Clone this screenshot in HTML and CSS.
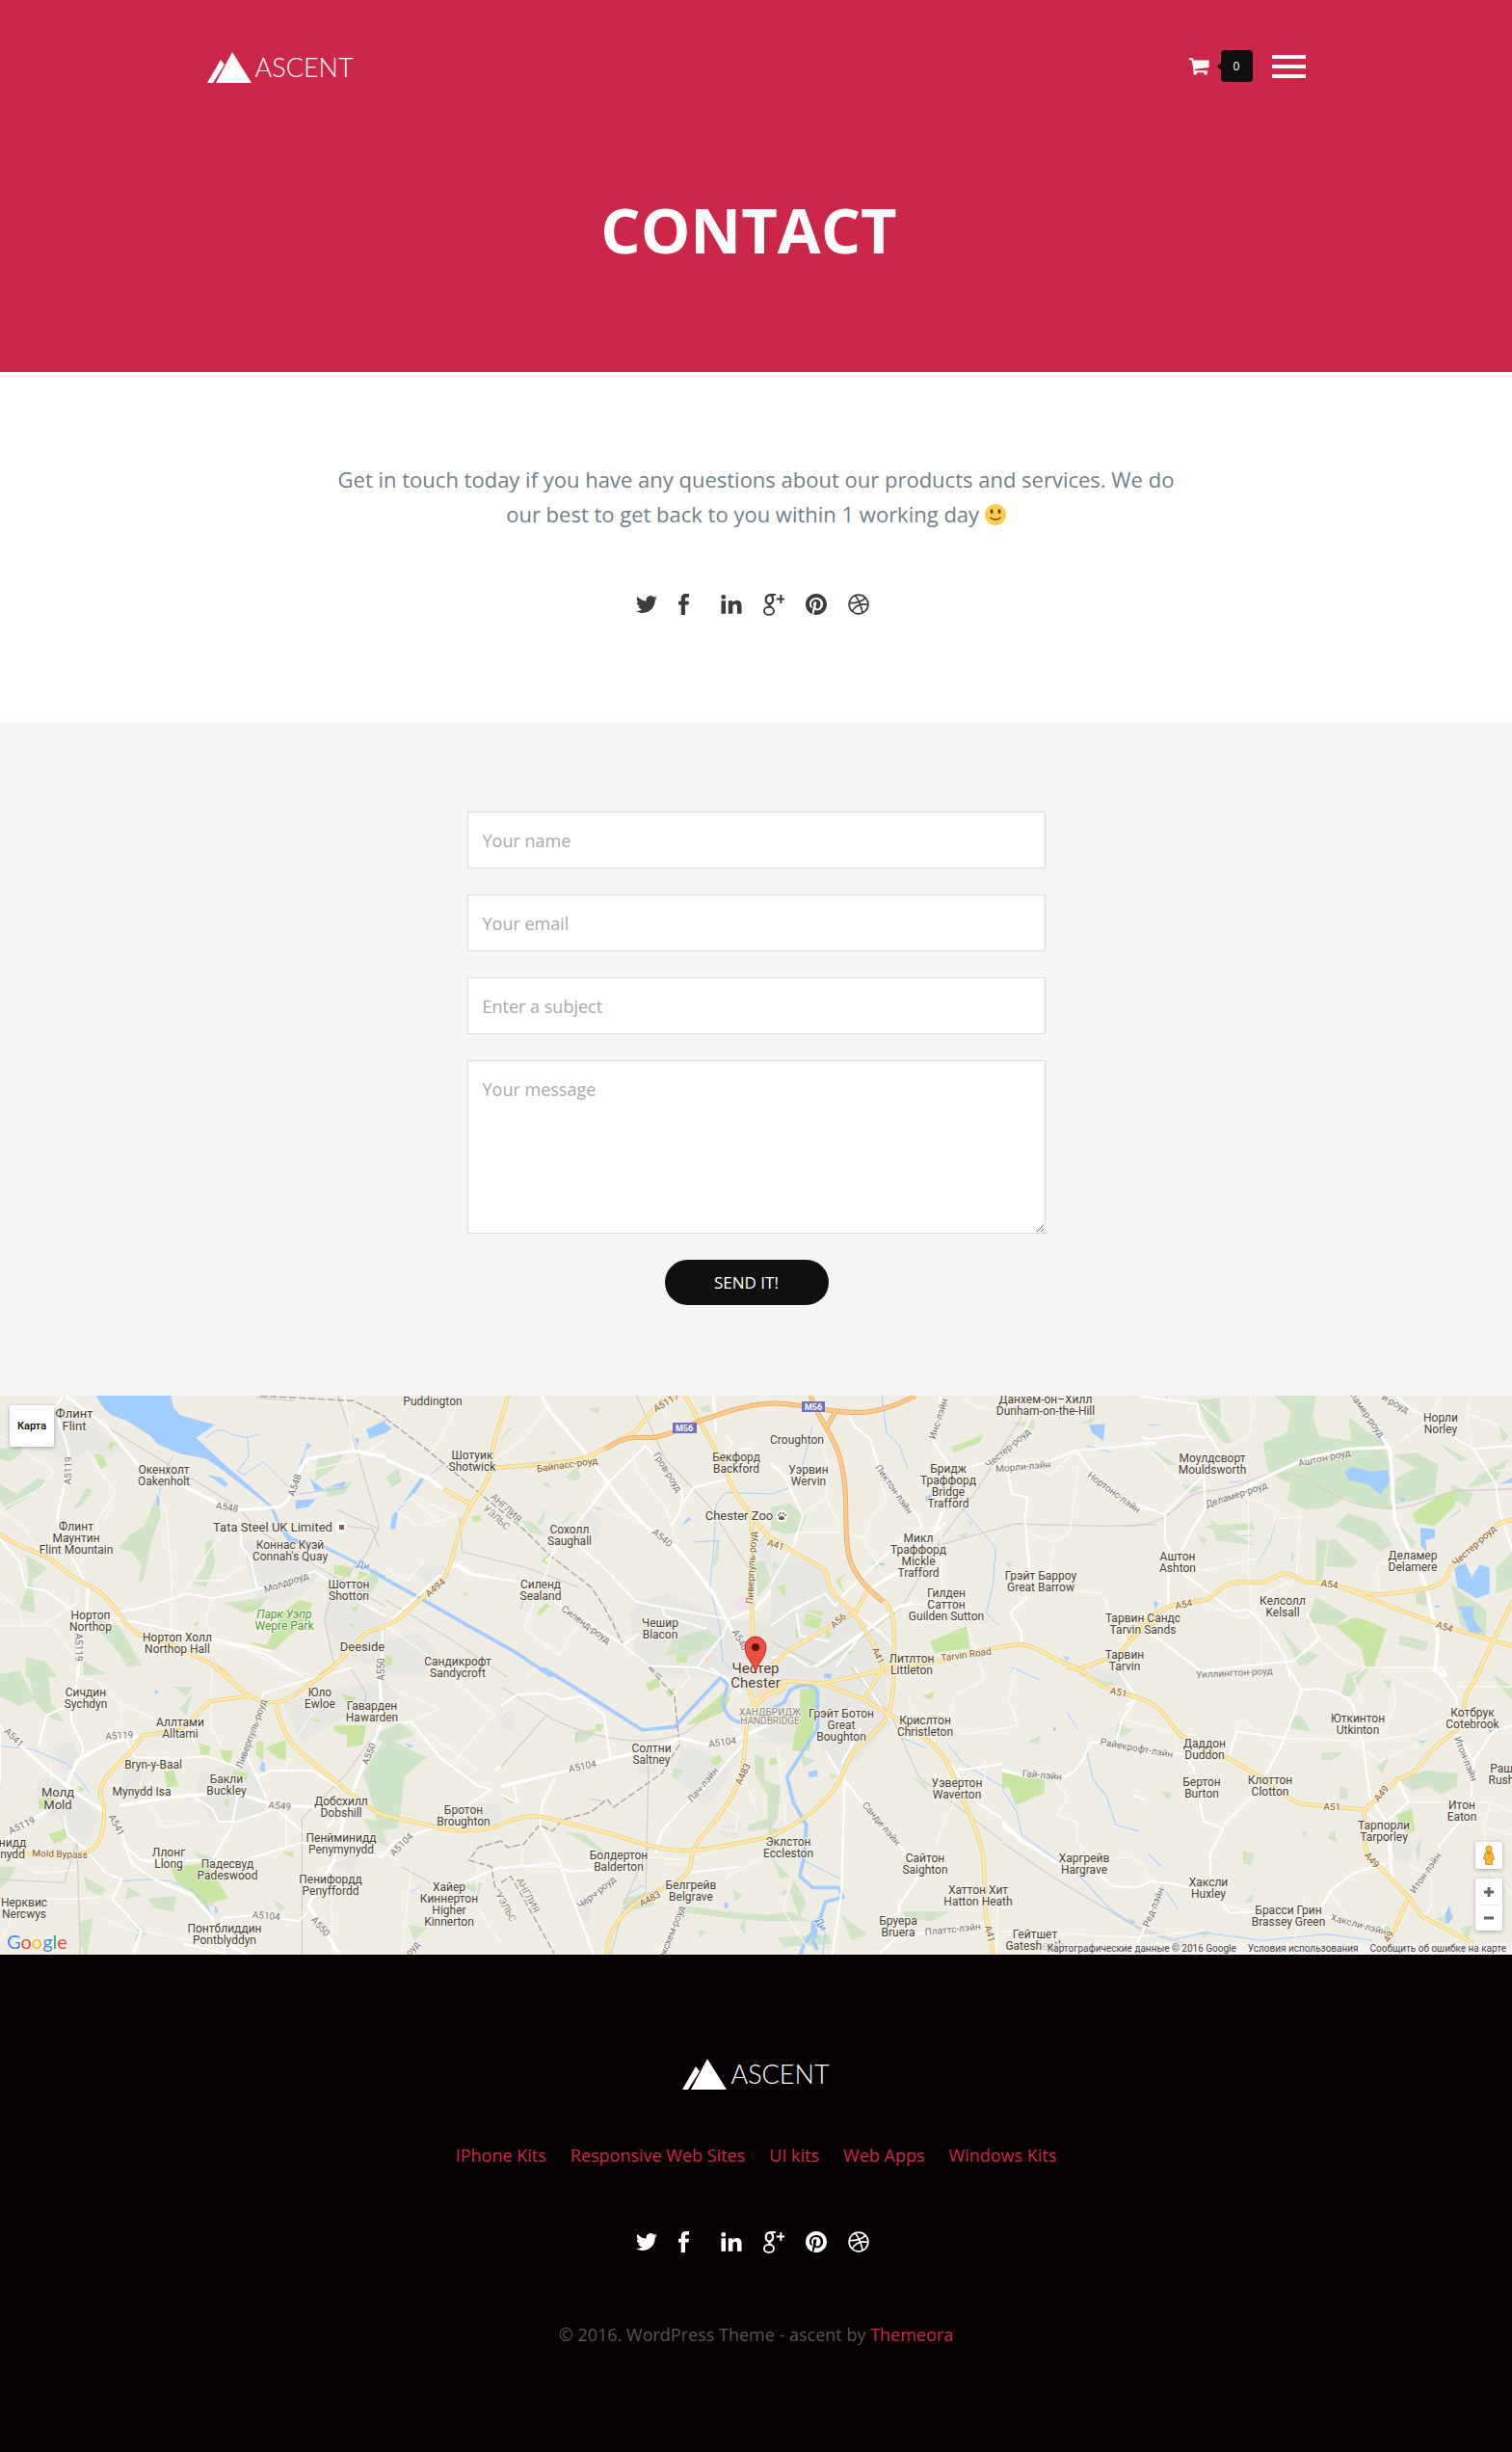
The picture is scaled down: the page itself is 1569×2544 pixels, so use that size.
FILE: index.html
```html
<!DOCTYPE html>
<html lang="en">
<head>
<meta charset="UTF-8">
<meta name="viewport" content="width=device-width, initial-scale=1">
<title>Contact - Ascent</title>
<link rel="stylesheet" href="styles.css">
</head>
<body>

<!-- icon sprite -->
<svg class="sprite" aria-hidden="true">
  <symbol id="i-mountain" viewBox="0 0 46 32"><path d="M26 0 46 32H9zM14 8l4 5L6 32H0z"/></symbol>
  <symbol id="i-twitter" viewBox="0 0 24 24"><path d="M23.95 4.57a10 10 0 0 1-2.82.77 4.96 4.96 0 0 0 2.16-2.72c-.95.55-2 .95-3.12 1.18a4.92 4.92 0 0 0-8.38 4.48C7.69 8.1 4.07 6.13 1.64 3.16a4.82 4.82 0 0 0-.67 2.47c0 1.71.87 3.21 2.19 4.1a4.9 4.9 0 0 1-2.23-.62v.06a4.92 4.92 0 0 0 3.95 4.83 5 5 0 0 1-2.21.08 4.94 4.94 0 0 0 4.6 3.42A9.87 9.87 0 0 1 0 19.54a14 14 0 0 0 7.55 2.21c9.05 0 14-7.5 14-13.98 0-.21 0-.42-.02-.63a9.94 9.94 0 0 0 2.42-2.57z"/></symbol>
  <symbol id="i-facebook" viewBox="0 0 24 24"><path d="M3 24V12.500H0V8.500h3V6C3 2 5 0 8.500 0H12v4H9.500C8 4 7.700 4.700 7.700 6v2.500H12l-.6 4H7.700V24z"/></symbol>
  <symbol id="i-linkedin" viewBox="0 0 24 24"><path d="M.5 8h5v14.500h-5zM3 1a2.700 2.700 0 1 1 0 5.400A2.700 2.700 0 0 1 3 1zM8.500 8h4.800v2c.8-1.400 2.400-2.400 4.700-2.400 4.500 0 5.500 2.900 5.500 6.900v8h-5v-7.200c0-1.900-.2-3.700-2.300-3.700s-2.700 1.600-2.700 3.600v7.300h-5z"/></symbol>
  <symbol id="i-google" viewBox="0 0 24 24"><g fill="none" stroke="currentColor"><ellipse cx="7" cy="6.500" rx="4" ry="5" stroke-width="2.600"/><ellipse cx="6.500" cy="19.500" rx="5.500" ry="4.300" stroke-width="2"/><path d="M7 1.200h7M9.500 10.500c-4 1.500-4 3 0 4.500" stroke-width="2.200"/><path d="M15 6h10M20 1v10" stroke-width="2.200"/></g></symbol>
  <symbol id="i-pinterest" viewBox="0 0 24 24"><path d="M12 0C5.373 0 0 5.372 0 12c0 5.084 3.163 9.426 7.627 11.174-.105-.949-.2-2.405.042-3.441.218-.937 1.407-5.965 1.407-5.965s-.359-.719-.359-1.782c0-1.668.967-2.914 2.171-2.914 1.023 0 1.518.769 1.518 1.690 0 1.029-.655 2.568-.994 3.995-.283 1.194.599 2.169 1.777 2.169 2.133 0 3.772-2.249 3.772-5.495 0-2.873-2.064-4.882-5.012-4.882-3.414 0-5.418 2.561-5.418 5.207 0 1.031.397 2.138.893 2.738.098.119.112.224.083.345l-.333 1.360c-.053.220-.174.267-.402.161-1.499-.698-2.436-2.889-2.436-4.649 0-3.785 2.750-7.262 7.929-7.262 4.163 0 7.398 2.967 7.398 6.931 0 4.136-2.607 7.464-6.227 7.464-1.216 0-2.359-.631-2.750-1.378l-.748 2.853c-.271 1.043-1.002 2.350-1.492 3.146 1.124.347 2.317.535 3.554.535 6.627 0 12-5.373 12-12S18.627 0 12 0z"/></symbol>
  <symbol id="i-dribbble" viewBox="0 0 24 24"><g fill="none" stroke="currentColor" stroke-width="1.800"><circle cx="12" cy="12" r="10.800"/><path d="M8 2c4 5 7 11 8.500 20M1.500 10.500C9 10.700 16 9 19.800 4.500M4.500 20c4-7 9.500-9.500 18.300-7.500"/></g></symbol>
  <symbol id="i-cart" viewBox="0 0 24 20"><path d="M0 0h4.500l.6 2.500H23.500v8.500L7 13v1.800h14.500V17H5V12L3 2.300H0z"/><circle cx="7.300" cy="18" r="2"/><circle cx="19.500" cy="18" r="2"/></symbol>
</svg>

<header class="hero">
  <div class="container nav">
    <a href="#" class="logo"><svg><use href="#i-mountain"/></svg><span>ASCENT</span></a>
    <div class="nav-right">
      <a href="#" class="cart" aria-label="Cart"><svg><use href="#i-cart"/></svg><span class="count">0</span></a>
      <button class="burger" type="button" aria-label="Menu"><span></span><span></span><span></span></button>
    </div>
  </div>
  <h1>CONTACT</h1>
</header>

<section class="intro">
  <p>Get in touch today if you have any questions about our products and services. We do our best to get back to you within 1 working day
    <svg class="smile" viewBox="0 0 36 36"><circle cx="18" cy="18" r="18" fill="#ffcc4d"/><g fill="#664500"><ellipse cx="11.500" cy="12.500" rx="2.500" ry="4"/><ellipse cx="24.500" cy="12.500" rx="2.500" ry="4"/><path d="M10 22c4 4 12 4 16 0 1-1 2 0 1.500 1-4 6-15 6-19 0-.5-1 .5-2 1.500-1z"/></g></svg></p>
  <nav class="social">
    <a href="#" aria-label="Twitter"><svg><use href="#i-twitter"/></svg></a>
    <a href="#" aria-label="Facebook"><svg><use href="#i-facebook"/></svg></a>
    <a href="#" aria-label="LinkedIn"><svg><use href="#i-linkedin"/></svg></a>
    <a href="#" aria-label="Google+"><svg><use href="#i-google"/></svg></a>
    <a href="#" aria-label="Pinterest"><svg><use href="#i-pinterest"/></svg></a>
    <a href="#" aria-label="Dribbble"><svg><use href="#i-dribbble"/></svg></a>
  </nav>
</section>

<section class="contact">
  <form class="contact-form">
    <input type="text" name="name" placeholder="Your name" aria-label="Your name">
    <input type="email" name="email" placeholder="Your email" aria-label="Your email">
    <input type="text" name="subject" placeholder="Enter a subject" aria-label="Enter a subject">
    <textarea name="message" placeholder="Your message" aria-label="Your message"></textarea>
    <button type="submit" class="btn">SEND IT!</button>
  </form>
</section>

<section class="map">
  <svg class="map-canvas" viewBox="0 0 1569 580" preserveAspectRatio="xMidYMid slice">
    <defs>
      <path id="y1" d="M0 455C60 500 110 505 150 530S230 595 270 612 340 660 380 715C420 790 500 775 560 810S680 860 720 905M980 905C1050 870 1110 790 1140 760L1205 740"/>
      <path id="y2" d="M0 740 40 720 130 640C190 600 200 560 215 500S250 380 290 330 330 240 335 180L385 15M335 250C400 240 580 240 640 210L690 185C740 150 770 150 790 120L860 40 910 25M180 315 265 362 290 330M930 20 975 100C1030 190 1060 260 1085 320L1140 400 1205 480M1140 400V560L1143 900"/>
      <path id="y3" d="M0 465 70 510C120 540 150 550 175 575 170 640 230 670 260 700L320 800 345 860 355 905M0 870C40 820 100 790 170 750L260 700 305 625M350 662C390 700 385 740 380 880M200 905 350 875 530 850 680 812 770 798C830 800 860 840 960 875L1080 830C1120 790 1140 750 1205 725M960 875 985 905"/>
      <path id="y4" d="M0 780C60 720 100 690 150 675L250 658C290 630 300 610 345 605H430C460 590 470 580 495 578S530 600 560 604 640 605 700 628 790 645 905 630 990 570 1020 545L1140 440C1160 415 1180 415 1205 410M640 610 720 640 860 695 1000 745 1205 805M1205 660 1140 790 1085 905"/>
      <path id="y5" d="M670 0 770 85C820 115 870 115 910 90L1040 0M770 90 655 105 560 195 440 212C420 270 340 310 320 360S325 400 325 440 320 560 270 575 150 590 60 575M860 115C870 180 900 240 950 275L1080 385 1170 450C1230 475 1280 475 1350 495S1500 510 1565 490"/>
      <path id="y6" d="M0 487C60 465 100 455 150 470L350 520C440 550 500 570 570 570S720 550 800 535 960 460 1010 410 1060 330 1090 270L1180 185C1215 140 1220 110 1222 0M1190 0 1130 100M770 60 790 125C750 180 765 250 750 320S690 450 630 520 610 610 570 650 450 700 400 750 330 830 330 905M790 120 830 85 880 65V42L1000 50 1190 8M1000 50 1130 100 1250 170C1330 230 1370 250 1400 320S1480 500 1495 560 1500 700 1510 780L1535 905"/>
      <path id="y7" d="M200 0 245 8C300 70 350 70 420 95S500 150 530 190 620 255 700 285L800 345C850 385 880 410 920 425L1115 443 1220 345C1270 340 1290 290 1340 240L1390 200C1430 160 1410 110 1435 70L1475 0M1115 443C1115 500 1100 560 1140 600L1250 715 1290 775C1340 800 1400 830 1450 860M1250 715 1170 895"/>
      <path id="o2" d="M685 190C730 160 760 150 830 155 900 145 950 110 1000 95S1100 55 1205 48"/>
      <path id="o3" d="M0 48C60 45 110 60 200 72S350 75 450 25M122 20C140 90 200 150 215 220 245 330 225 400 240 510 250 570 290 620 350 665M175 120 200 75"/>
    </defs>

    <rect width="1569" height="580" fill="#f0ede5"/>

    <svg x="0" y="-8" width="400" height="300" viewBox="0 0 1200 900">
      <path class="town" d="M180 60 270 110 400 190 330 220 270 190 230 240 170 210 110 190zM760 470 900 500 1000 570 960 630 880 670 800 650 770 560zM1020 620 1100 640 1200 720V870L1060 840 1010 720z"/>
      <path class="wood" d="M0 190 60 180 70 200 30 230 0 220zM0 300 50 330 120 280 150 290 70 350 20 380 0 350zM80 520 150 560 100 600 110 700 60 690 90 600zM370 500 400 460 450 430 490 330 500 400 470 480 450 590 430 610 440 550 410 510zM270 310 290 320 250 370 230 375zM640 480 660 470 670 550 640 620 600 610 640 550zM300 720 370 740 440 860 400 870 350 800 310 760zM80 840 140 850 180 900H80zM700 670 830 650 810 690 760 700zM990 210 1080 195 1040 250 980 290zM260 850 330 890 260 895zM1010 310 1100 290 1070 330 1020 340zM1110 620 1170 560 1180 600 1140 660z"/>
      <path class="park" d="M290 205 320 210 335 240 315 252zM345 165 362 172 345 192 335 185zM770 790 830 800 880 700 930 660 975 670 940 740 890 780 850 820zM1040 550 1100 560 1090 590 1040 580zM1120 570 1150 580 1110 600zM760 675 790 680 790 700 760 695zM1090 685 1120 678 1105 700zM1085 735 1105 730 1095 750zM600 735 620 725 610 745z"/>
      <path class="water" d="M298 20C320 70 340 85 390 100L470 150 490 175 560 205 640 220 700 260 750 300 840 370 870 440 900 480 1010 500 1110 550 1200 600V585L1090 530 1000 485 915 468 880 440 850 370 760 290 690 230 610 155 670 115 560 85 540 60 530 20zM645 270 690 280 710 300 700 308zM965 282 1010 318 980 320zM920 350 985 345 960 370 920 378zM1140 130 1200 100V140L1150 158zM1105 155 1118 160 1112 180zM955 170 970 180 955 192zM490 330 500 330 495 370 488 360zM1030 305 1075 290 1070 308z"/>
      <path class="stream" d="M640 155C680 120 700 130 720 145L770 155 775 210 740 260 760 270 820 230 850 260 900 310M770 155 805 145M930 330 1080 310M955 180 930 260 940 220M490 370 505 270 540 210"/>
      <path class="rail" d="M230 60 560 260 740 370 800 440 960 540 1200 680M800 30 920 40M1050 20 1110 190 1180 430 1140 520 1040 620 1010 720 1040 860M1050 380 1180 440M1080 430 1160 440 1180 500"/>
      <path class="border-line" d="M810 25 1100 40 1200 90"/>
      <path class="lane" d="M70 195 170 260 130 310 0 380M270 200 360 325 300 420 310 480 240 555M490 320 520 400 535 600 530 790M0 380 80 440 150 560M750 410 720 430 650 510 590 610 560 640M0 640 60 690 70 740 160 740 200 790 250 860M0 740H130L240 670 240 620M660 660 640 720 660 790 760 810 900 880M0 150 70 180M950 260 1100 225 1200 160M960 220 960 260M600 600 690 600 760 550M1100 190 1070 20M350 370 320 420M250 740 360 730 440 760"/>
      <path class="street" d="M200 20 170 60 215 200C210 310 180 350 178 420L230 540 275 620 270 700 245 780V900M0 470 60 540 80 620 140 630 240 700 380 720 700 790 830 830 940 900M380 695 460 680 580 640 660 655 790 630 900 600 980 570 1090 650 1200 710M750 440V490L780 530 800 625M700 790 850 820M1190 900V740"/>
      <path class="main" d="M205 25 330 120 430 240 570 305 680 360 750 380 870 370C930 340 910 260 960 220L1100 195 1200 215"/>
      <use class="a-case" href="#y1"/><use class="a-road" href="#y1"/>
    </svg>

    <svg x="400" y="-8" width="400" height="300" viewBox="0 0 1200 900">
      <path class="town" d="M760 700 800 660 880 640 1000 690 1100 730 1200 720V900H860L780 830zM600 410 640 380 680 430 640 490 590 480zM90 560 180 550 210 590 120 610zM0 790 100 760 160 820 120 900H0zM1140 500 1200 430V560z"/>
      <path class="wood" d="M560 280 600 240 605 280 590 290zM380 130 430 100 400 120 350 170zM420 410 460 420 500 460 450 450zM1020 560 1030 480 1040 470 1035 540zM870 830 900 780 1000 750 1045 790 960 830zM470 430 500 370 490 420zM630 65 670 60 660 80zM510 200 530 195 525 210zM980 60 1010 50 1015 75 985 75zM540 430 600 370 570 410zM500 290 520 315 490 300zM700 680 720 760 740 800 710 740zM0 280 40 250 50 290 20 310zM1150 540 1180 540 1200 600 1160 650z"/>
      <path class="park" d="M650 370 680 375 660 380zM270 400 295 395 300 410 275 420zM490 530 510 520 505 550 485 540zM470 700 500 670 510 680 480 710zM240 640 260 635 250 650zM0 830 20 840 20 860 0 870zM905 830 940 830 940 855 905 855z"/>
      <path class="shop" d="M1080 660 1130 640 1130 690 1090 690z"/>
      <path class="sand" d="M990 840 1020 835 1000 860z"/>
      <path class="canal" d="M0 595 100 650 240 730 400 820 520 900"/>
      <path class="water" d="M920 430 945 400 950 410zM15 440 20 400 60 350 110 280 120 285 90 330 40 380 30 440zM0 110 20 125 0 140z"/>
      <path class="stream" d="M140 270 190 230M1200 330 1060 325 1030 360 1020 520 1010 620 1040 740 1050 850 1080 880M960 480 1040 475M430 660 420 690"/>
      <path class="rail" d="M780 20 870 220 1010 370 1130 560M230 400 240 510 440 560 600 620M0 660 200 780 380 900"/>
      <path class="border-line" d="M0 95 120 185 290 325 430 440 510 520 640 620 680 680 740 800 860 900"/>
      <path class="lane" d="M150 190 220 70 190 20M330 230 430 160 500 60M80 330 220 400 100 430 30 380 80 340 170 420M610 480 540 460 490 600 430 750 540 830 570 780 620 720M650 360 770 410 830 440M770 200 780 260 870 370 910 480M0 560 70 600 120 540M1060 150 1080 170 1040 230M510 540 490 620M700 280 640 360M1140 700 1200 640M1100 760 1200 870M850 20 870 90M0 740 200 880"/>
      <path class="street" d="M0 740 160 590 240 540M220 545 270 580 420 605M520 660 740 800 820 865 970 870 1050 770 1070 720M970 870 1060 900M500 540 600 420 700 290 810 180 920 310C930 350 920 390 890 430M925 360 960 310 1080 280M600 490 680 560 780 665 850 680 1070 720M860 680 870 710 1000 750M1140 190 1100 190M1020 20 1030 140M1070 720 1150 690 1200 630M740 800 790 765"/>
      <path class="main" d="M0 222 140 285 190 325M485 25 510 70 630 210 740 360 820 440 900 490 960 560 1020 640 1060 720 1100 790 1140 830M210 550 270 580 330 590"/>
      <use class="a-case" href="#y2"/><use class="a-road" href="#y2"/>
      <use class="m-case" href="#o2"/><use class="m-road" href="#o2"/>
    </svg>

    <svg x="800" y="-8" width="400" height="300" viewBox="0 0 1200 900">
      <path class="town" d="M0 560 60 520 170 570 200 660 300 740 370 790V900H0z"/>
      <path class="wood" d="M0 370 60 360 110 400 90 450 40 455 0 440zM580 460 610 450 605 470zM730 545 750 540 745 560zM960 110 1010 90 1000 110zM610 410 630 420 620 430zM310 540 340 545 330 565zM1060 350 1070 400zM640 780 680 765zM10 540 30 560 0 560zM750 110 820 100 820 130zM100 320 90 330z"/>
      <path class="park" d="M560 185 660 145 650 170 570 200zM495 790 610 740 620 810 510 825zM15 620 45 610 45 650zM200 600 235 575 215 600 230 640zM110 700 160 720 150 750 100 740zM170 740 190 770 170 780zM235 815 265 820 240 830zM105 690 165 695 155 710zM75 750 95 760 80 780z"/>
      <path class="water" d="M990 115 1040 112 1035 165 1015 150 1000 140zM480 340 500 330 500 350 485 355zM330 545 355 545 350 555zM1190 670 1200 660V685zM910 835 930 840 920 850z"/>
      <path class="stream" d="M345 25 360 140 400 180 425 250M590 320 600 380 660 450 700 500 690 620 670 700 710 740M0 330 60 310M90 270 130 120M1060 200 980 180"/>
      <path class="rail" d="M1200 425 1050 430 760 423 520 490M780 90 640 320 530 470 410 680 280 780 160 870M0 790 140 860 180 880"/>
      <path class="lane" d="M200 80 130 130M100 390 170 345 230 450 290 470 360 600M80 450 220 450M290 470 320 390 360 350 340 290M490 430 530 440 530 600 540 620M610 740 640 820 660 900M800 450 880 480 930 450 960 230M1160 150 1160 170M880 480 870 560 830 600M950 630 1030 640 1060 700 1130 830M950 195 870 270 780 240M590 30 640 60 700 70M0 240 70 300M160 170 180 250 170 340M540 670 400 675"/>
      <path class="street" d="M0 235 40 270 100 400 70 490 0 610M240 80 260 120 310 160 330 230 370 290 420 360 460 400 470 430 410 470 230 640 200 680M530 25 520 80 500 160 555 240M780 170 700 225 600 250M810 90 790 130M730 220 750 330 800 340 790 410 805 560M750 240 860 230 950 195 1040 320 1140 375 1200 380M950 195 1110 180 1200 170M800 650 745 700 780 760 780 800M0 740 70 690 170 640 200 680M0 840 60 830 120 870M80 700 90 770 180 790M280 770 200 870M250 690 340 760 380 800M545 420 520 440 410 530"/>
      <path class="main" d="M545 350 510 450M400 570 310 625M440 670 400 680 150 860 100 890"/>
      <use class="a-case" href="#y3"/><use class="a-road" href="#y3"/>
      <use class="m-case" href="#o3"/><use class="m-road" href="#o3"/>
    </svg>

    <svg x="1169" y="-8" width="400" height="300" viewBox="0 0 1200 900">
      <path class="wood" d="M460 25H590L580 90 600 150 700 165 690 90 740 130 800 165 820 240 820 375 740 370 680 340 640 370 560 380 500 350 510 300 440 260 425 170 500 140 510 70zM220 40 290 30 295 110 330 170 300 170 250 110zM830 210 900 200 970 240 960 330 900 350 830 360 840 280 900 250zM690 390 780 420 830 490 790 510 740 470 650 430zM590 470 625 475 610 600 590 600zM630 470 650 470 720 540 700 560 620 555zM590 650 690 710 650 740 560 730zM440 470 470 380 450 480 400 560zM240 430 390 420 400 440 280 445zM260 410 400 490 280 475zM1150 560 1200 510V620L1150 640zM1010 610 1060 650 1120 690 1120 790 1040 740zM840 420 900 480 890 500zM850 770 940 790 930 820 850 800zM1010 300 1080 330 1060 370 1020 350zM480 750 560 840 540 870 500 790zM510 510 525 520 515 550zM1100 270 1190 220 1150 290 1060 310zM170 300 240 310 200 330zM220 460 250 470 240 490zM60 180 160 240 130 240zM560 820 600 830 550 870zM900 640 940 630 930 680 900 670zM1160 120 1190 150 1170 170zM970 170 1060 220 1040 230z"/>
      <path class="park" d="M650 740 710 715 740 720 810 750 770 870 745 870 730 810zM890 390 980 330 1030 325 1020 370 960 430 900 420zM800 375 830 360 825 378z"/>
      <path class="water" d="M680 260 700 245 760 260 810 255 820 290 790 332 750 300 690 285zM775 130 798 160 780 165zM845 340 870 345 860 355zM915 435 960 440 960 465 930 475 935 510 915 490zM1020 560 1055 545 1075 590 1100 550 1130 560 1130 640 1090 655 1030 620zM1035 680 1080 680 1080 720 1110 760 1070 765 1050 720zM85 670 100 670 90 690zM750 45 760 60zM1160 300 1200 280V295zM955 680 975 675 970 685z"/>
      <path class="stream" d="M320 295 360 290M360 460H390M1000 410 1040 380M70 115H105M125 25V40"/>
      <path class="rail" d="M0 430C100 430 140 390 180 350S300 330 380 290 530 260 590 300 740 380 830 375 960 330 1030 320L1200 315"/>
      <path class="lane" d="M50 170 160 280 170 300M380 25 395 70 380 150 300 190M230 50 330 130M470 410 540 400 530 600M120 520 240 570 410 530 440 480 470 380 380 340 380 560 385 660 420 740 420 900M780 550 870 530M780 550 790 650M1070 30 1060 100 1080 190M850 170 920 110 980 30M1160 120 1120 100 1060 80M430 640 520 600 470 680M0 180 80 165M1150 260 1200 250M600 780 650 830 730 870H960M240 670 370 720 430 640M330 600 300 640"/>
      <path class="street" d="M40 25 220 50 230 110 290 200 240 260 245 375 200 450 170 510 130 580 130 680M0 350 120 395 120 480 140 510 180 580 330 695 380 690 430 740 490 830 510 900M50 155 70 160 180 145 250 155M60 750 230 880 520 850 600 780 560 700M1200 180 1080 190 1020 155 1000 110 890 70 840 25M1080 190 1150 300 1160 380 1200 500M950 880 980 870 1000 900M120 390 190 320 240 270"/>
      <path class="main" d="M710 25 780 130 820 190 835 410 890 530 930 610 970 780 960 880 1000 900M245 375 450 270 560 220 690 190 810 185"/>
      <use class="a-case" href="#y4"/><use class="a-road" href="#y4"/>
    </svg>

    <svg x="0" y="282" width="520" height="300" viewBox="0 0 1560 900">
      <path class="town" d="M120 340 200 350 270 410 310 470 260 560 180 470 110 430zM620 330 760 290 830 400 820 460 740 480 660 480 610 400zM880 110 960 90 1080 60 1200 40 1240 100 1100 140 940 230zM390 310 460 320 440 390 380 370zM1030 560 1120 570 1100 640 1030 620zM1470 420 1560 430V490H1480zM160 240 230 230 250 290 200 330z"/>
      <path class="wood" d="M0 20 60 10 110 100 60 120 0 90zM90 30 150 20 160 110 200 170 160 160 110 110zM1130 330 1200 220 1330 280 1260 340 1240 500 1180 510 1160 420zM1130 470 1180 480 1210 560 1170 540zM1160 210 1250 170 1290 210 1200 240zM460 720 550 710 540 760 480 750zM600 700 630 660 680 720 640 760zM250 790 290 780 270 900 250 860zM850 720 890 750 870 760zM400 680 440 710 390 720zM260 650 330 690 310 710 270 690zM560 130 600 80 580 150zM600 570 680 600 640 620zM1440 680 1500 670 1490 710zM1270 800 1330 810 1290 850zM0 620 50 620 30 660 0 690zM540 60 600 60 580 90zM430 800 460 830 420 850z"/>
      <path class="park" d="M530 620 640 610 690 680 710 720 620 740 600 700 550 670zM1040 180 1140 180 1130 240 1080 250 1080 210 1040 200zM510 325 540 320 555 370 520 375zM620 235 655 245 650 275 625 275zM685 255 725 260 715 310 690 280zM800 230 820 230 820 290 795 270zM825 250 890 225 890 290 860 280zM150 520 205 500 210 530 170 550zM120 410 160 400 160 440 120 440zM240 370 265 375 250 390zM725 320 770 330 770 350 730 345zM880 575 915 572 910 592zM1060 80 1110 95 1080 110zM970 158 1005 165 980 170zM700 410 710 410 710 430 700 430z"/>
      <path class="water" d="M815 290 825 300 825 325 808 320zM480 70 495 75 485 85zM668 740 680 760 670 770zM355 165 370 170zM1260 235 1290 245 1275 250z"/>
      <path class="stream" d="M0 245 100 255 210 300 280 390M380 665 460 660 530 665 600 695 640 730 670 800M1310 680 1280 700M400 360 380 400"/>
      <path class="rail" d="M940 900V470L1080 330 1150 230M1090 0 1140 80 1130 150M0 660 200 670 240 540 250 900M1250 620 1340 670"/>
      <path class="border-line" d="M1560 540 1490 560 1460 600 1530 620 1540 680 1560 700"/>
      <path class="lane" d="M240 30 300 40 370 110 480 160M370 110 390 220M660 0 655 180 690 250M960 60 1000 100 930 210M1210 60 1370 130 1250 180M1280 620 1250 900M1030 620 1035 900M890 430 890 560 850 600M0 570 120 640 240 630M0 860 60 720 240 720 370 710M440 820 600 850M320 780 440 830 420 900M980 640 1130 560 1250 600M850 0 1010 30M1330 200 1490 320M1540 140 1410 300M450 320 430 390M470 430 510 500 620 480M600 240 620 180M1370 0 1540 150M1490 600 1480 740 1560 860M900 280 880 340M160 360V300"/>
      <path class="street" d="M240 0V40L220 150C220 200 280 240 250 280L210 360M0 360 0 180M145 150 230 110M145 150 120 245M390 220 420 280 560 285 640 275 740 310 770 280 800 340 830 410M800 340 850 320 970 320 1050 370M600 400 660 440 680 480 740 480 860 440 940 510M740 400 720 500 660 600M200 460 210 520 270 570 330 640 380 660 350 720 440 820 410 900M380 550 440 600 620 600M330 450 380 520 410 610 480 660M450 605 620 600 760 600 940 545 1190 590M1020 500 1060 440M1230 170 1280 170 1370 280 1490 370 1530 380 1410 460M1540 320 1560 310M820 80 770 280M820 80 950 40 1100 0M690 780 800 770 930 790 960 760M570 860 700 890 690 780M1190 590 1230 540 1350 500M1420 680 1560 620"/>
      <path class="main" d="M0 185 60 240 160 330 250 400 330 450M210 360 240 290 330 240 440 210M0 550 60 500 140 450 200 400M370 430 560 400 730 390 860 430 1000 435M1180 0 1190 170 1120 330 1080 430 1040 600 960 740 1060 900M480 660 600 710 660 780 690 850 780 900"/>
      <use class="a-case" href="#y5"/><use class="a-road" href="#y5"/>
    </svg>

    <svg x="520" y="282" width="520" height="300" viewBox="0 0 1560 900">
      <path class="town" d="M560 250 600 250 700 290 740 270 690 370 640 430 590 400 540 330zM790 0H1190L1210 180 1100 300 1050 330 1000 260 960 60 830 110 740 60zM790 110 900 100 930 180 900 240 800 230zM670 500 750 480 740 520 700 530zM240 740 280 730 270 800 240 780zM410 280 480 280 480 330 430 330zM0 140 40 140V200L0 190z"/>
      <path class="wood" d="M790 270 820 280 820 350 870 370 860 470 840 500 770 510 770 490 830 470 830 400 790 330zM230 200 310 190 260 230 230 235zM830 500 860 500 850 600 900 650 870 660 840 580zM200 510 260 520 330 580 300 570zM560 740 700 760 830 770 900 760 960 790 820 790 700 780 560 760zM720 690 750 710 730 730zM860 840 1020 830 1030 860 880 870zM1250 760 1400 760 1340 790 1260 780zM400 630 450 690 430 670zM380 720 460 700 480 740 390 760zM540 310 570 320 550 350 530 340zM910 660 950 730 930 780 900 700zM1060 770 1140 830 1090 850zM930 270 980 290 940 310zM1280 340 1320 360 1330 390zM610 820 640 820 620 840zM880 690 900 700 870 710zM760 780 760 830 740 810z"/>
      <path class="park" d="M575 180 690 80 715 95 690 140 620 170zM930 70 980 60 990 100 960 260 905 260 910 230 930 130zM450 50 490 30 495 60 460 75zM295 175 320 180 310 200 295 195zM650 290 680 270 690 290 665 305zM835 285 855 280 860 300 835 305zM1020 330 1045 335 1035 348zM510 75 540 65 530 95zM1310 90 1350 75 1340 100zM1320 145 1380 145 1360 160zM0 400 40 420 30 425z"/>
      <path class="sand" d="M800 60 870 40 880 60 830 85 790 100z"/>
      <path class="canal" d="M120 -5 290 100 440 195 540 185 600 120 685 30 705 55 690 110C700 150 720 175 760 170L880 110 900 70C940 50 970 50 985 75V190L890 340 910 420 950 490 945 580 930 650 970 685 1050 685 1065 715 1010 730 990 790 940 870 930 900M970 850 985 880"/>
      <path class="water" d="M955 325 985 318 985 340 958 342zM965 790 985 780 985 840 965 850zM695 732 706 732 706 750 695 750zM380 750 410 740 400 765zM1005 20 1030 20 1025 35 1005 32z"/>
      <path class="stream" d="M390 710 440 680M1390 240 1440 300 1560 370M940 600 1060 660M985 780 1010 830 1000 900M1250 220 1320 250M230 230 240 200M280 410 310 415"/>
      <path class="rail" d="M0 60 160 160C300 230 460 250 580 200L690 110 760 0M1090 0 1220 160 1300 340 1560 540M0 310 140 150M460 240 450 700 380 750 340 900M380 740 460 560"/>
      <path class="border-line" d="M460 0 540 90 555 240 500 330 350 435 330 410 280 450 190 475 160 510 120 490 70 550 20 560 0 540M0 670 30 650 70 720 165 890"/>
      <path class="lane" d="M20 130 0 150M210 90 320 140 340 290M860 240 880 420 890 520M570 0 590 30 540 85M110 0 80 30M700 440 740 460 730 510 670 500M690 660 830 580M450 590 590 600 690 560M1270 90 1280 140 1400 150 1410 90 1500 40V0M1220 145 1400 145 1430 210 1560 190M1350 560 1380 480 1420 400M1480 320 1510 290 1500 420M720 190 820 220M60 620 70 560M0 620 180 620M1540 900 1550 680M900 660 880 760 960 880M750 330 800 460"/>
      <path class="street" d="M0 120 50 85 140 80 190 100 250 90 320 150 340 280M170 340 130 420 120 490 180 600 210 690 230 740 290 900M0 625 160 610 210 635 350 625M40 370 50 420 0 395M240 740 350 670M480 580 500 510 570 430 640 370 760 230M1010 260 1060 340 1140 440 1270 590 1300 650 1240 740 1230 840 1180 890M1070 340 1060 700 1030 900M1290 830 1500 795M490 900 560 750M580 640 740 620M650 0 720 50 750 80M1100 0 1210 160M1420 320 1500 310 1560 300M1400 300 1480 420 1560 470M1060 300 1120 190"/>
      <path class="main" d="M0 370 170 330 340 285 480 250 560 220 640 240 740 220 850 170"/>
      <use class="a-case" href="#y6"/><use class="a-road" href="#y6"/>
    </svg>

    <svg x="1040" y="282" width="529" height="300" viewBox="0 0 1568 900" preserveAspectRatio="none">
      <path class="town" d="M260 0 380 10 380 60 280 50zM1190 530 1270 540 1250 610 1190 600z"/>
      <path class="wood" d="M1220 350 1300 320 1400 330 1400 370 1350 395 1310 370 1260 385zM1040 90 1060 20 1130 0 1070 90zM355 175 400 195 370 215 350 200zM985 265 1050 265 1010 290 980 285zM740 570 775 580 765 615 740 610zM1000 530 1020 505 1030 545zM920 510 940 510 930 535zM490 385 525 390 510 415zM1040 370 1065 380 1060 410 1038 410zM745 730 770 705 770 730zM1510 20 1568 60V100L1530 60zM1150 310 1190 280 1170 330zM1170 40 1200 40 1190 70zM890 150 920 150 950 200 890 190zM370 790 400 780 410 795zM600 820 640 825 620 840zM1330 780 1390 770 1370 800zM1410 810 1450 800 1430 850zM80 230 120 210 110 240zM240 20 350 50 300 60zM1460 40 1490 70zM1270 560 1290 530 1280 610z"/>
      <path class="park" d="M0 320 130 350 130 390 40 430 20 370 0 380zM1210 460 1260 440 1270 510 1240 515zM1175 800 1195 810 1190 825 1175 815z"/>
      <path class="water" d="M155 185 168 190 160 200zM1375 740 1385 780 1370 800 1362 770zM1495 190 1515 200 1500 205zM390 790 410 790 400 800zM875 130 885 130zM1280 230 1310 228 1290 236z"/>
      <path class="stream" d="M0 380 45 450 60 520 140 580 230 640 330 750 430 820 520 850 620 825 800 850 1000 830 1140 850M260 260 280 350 320 400 350 490 420 510M450 580 490 620M490 680 540 750M200 140 230 190M30 0 120 40"/>
      <path class="rail" d="M0 545 160 655 400 800 560 860"/>
      <path class="lane" d="M40 0 20 100 50 180 0 190M370 160 520 200 600 210M160 350 200 400 170 460 230 480 230 540 280 600 400 590 440 620 450 670M530 200 540 260M720 200 740 160 850 260M870 220 1100 230 1270 210 1390 150M1070 230 1160 290 1280 240M1110 120 1080 30 1120 0M1200 40 1210 110 1180 190 1110 240M1490 500 1568 520M1250 420 1500 420 1568 450M1490 620 1568 700M1010 700 1090 820M1500 420 1480 500 1500 600M1250 610 1320 660 1320 750 1290 780M620 820 400 840 0 820M930 720 900 850M1180 20 1350 100M690 740 780 760M1210 350 1250 420M1400 60 1568 60"/>
      <path class="street" d="M350 0 415 95 370 160 350 230 270 235C250 290 230 330 180 345L100 340M415 95 380 120M560 265 590 320 620 480 680 500 640 580 640 680 700 765 780 760M490 260 560 270M880 0 920 70 900 140 860 240 810 335 770 400 680 490M920 70C980 60 1050 70 1080 120L1110 240 1130 400 1180 480 1200 660M700 270 720 200 870 220M290 640 340 680 410 685 460 665 520 672 600 690M480 680 430 830 390 900M980 750 1010 695 1080 640 1180 610M1220 350 1250 420 1180 480M1330 0 1400 100 1390 200 1450 290 1440 440 1390 500 1340 560M1115 450 1190 500 1200 600M1450 290 1510 200 1568 180M980 770 1150 820 1180 800M400 400 440 410"/>
      <path class="main" d="M0 480 60 540 110 570 200 630M0 320 80 340M0 490 50 530"/>
      <use class="a-case" href="#y7"/><use class="a-road" href="#y7"/>
    </svg>

    <!-- place names -->
    <g class="place">
      <text x="449" y="10">Puddington</text>
      <text x="170" y="81">Окенхолт<tspan x="170" dy="12">Oakenholt</tspan></text>
      <text x="79" y="140">Флинт<tspan x="79" dy="12">Маунтин</tspan><tspan x="79" dy="12">Flint Mountain</tspan></text>
      <text x="301" y="159">Коннас Куэй<tspan x="301" dy="12">Connah's Quay</tspan></text>
      <text x="362" y="200">Шоттон<tspan x="362" dy="12">Shotton</tspan></text>
      <text x="94" y="232">Нортоп<tspan x="94" dy="12">Northop</tspan></text>
      <text x="184" y="255">Нортоп Холл<tspan x="184" dy="12">Northop Hall</tspan></text>
      <text x="490" y="66">Шотуик<tspan x="490" dy="12">Shotwick</tspan></text>
      <text x="764" y="68">Бекфорд<tspan x="764" dy="12">Backford</tspan></text>
      <text x="591" y="143">Сохолл<tspan x="591" dy="12">Saughall</tspan></text>
      <text x="561" y="200">Силенд<tspan x="561" dy="12">Sealand</tspan></text>
      <text x="685" y="240">Чешир<tspan x="685" dy="12">Blacon</tspan></text>
      <text x="475" y="280">Сандикрофт<tspan x="475" dy="12">Sandycroft</tspan></text>
      <text x="827" y="50">Croughton</text>
      <text x="1085" y="8">Данхем-он–Хилл<tspan x="1085" dy="12">Dunham-on-the-Hill</tspan></text>
      <text x="839" y="81">Уэрвин<tspan x="839" dy="12">Wervin</tspan></text>
      <text x="984" y="80">Бридж<tspan x="984" dy="12">Траффорд</tspan><tspan x="984" dy="12">Bridge</tspan><tspan x="984" dy="12">Trafford</tspan></text>
      <text x="953" y="152">Микл<tspan x="953" dy="12">Траффорд</tspan><tspan x="953" dy="12">Mickle</tspan><tspan x="953" dy="12">Trafford</tspan></text>
      <text x="1080" y="191">Грэйт Барроу<tspan x="1080" dy="12">Great Barrow</tspan></text>
      <text x="982" y="209">Гилден<tspan x="982" dy="12">Саттон</tspan><tspan x="982" dy="12">Guilden Sutton</tspan></text>
      <text x="1186" y="235">Тарвин Сандс<tspan x="1186" dy="12">Tarvin Sands</tspan></text>
      <text x="1167" y="273">Тарвин<tspan x="1167" dy="12">Tarvin</tspan></text>
      <text x="946" y="277">Литлтон<tspan x="946" dy="12">Littleton</tspan></text>
      <text x="1495" y="27">Норли<tspan x="1495" dy="12">Norley</tspan></text>
      <text x="1258" y="69">Моулдсворт<tspan x="1258" dy="12">Mouldsworth</tspan></text>
      <text x="1222" y="171">Аштон<tspan x="1222" dy="12">Ashton</tspan></text>
      <text x="1466" y="170">Деламер<tspan x="1466" dy="12">Delamere</tspan></text>
      <text x="1331" y="217">Келсолл<tspan x="1331" dy="12">Kelsall</tspan></text>
      <text x="89" y="312">Сичдин<tspan x="89" dy="12">Sychdyn</tspan></text>
      <text x="332" y="312">Юло<tspan x="332" dy="12">Ewloe</tspan></text>
      <text x="386" y="326">Гаварден<tspan x="386" dy="12">Hawarden</tspan></text>
      <text x="187" y="343">Аллтами<tspan x="187" dy="12">Alltami</tspan></text>
      <text x="159" y="387">Bryn-y-Baal</text>
      <text x="147" y="415">Mynydd Isa</text>
      <text x="235" y="402">Бакли<tspan x="235" dy="12">Buckley</tspan></text>
      <text x="354" y="425">Добсхилл<tspan x="354" dy="12">Dobshill</tspan></text>
      <text x="481" y="434">Бротон<tspan x="481" dy="12">Broughton</tspan></text>
      <text x="354" y="463">Пенйминидд<tspan x="354" dy="12">Penymynydd</tspan></text>
      <text x="13" y="468">нидд<tspan x="11" dy="12">rnydd</tspan></text>
      <text x="175" y="478">Ллонг<tspan x="175" dy="12">Llong</tspan></text>
      <text x="236" y="490">Падесвуд<tspan x="236" dy="12">Padeswood</tspan></text>
      <text x="343" y="506">Пенифордд<tspan x="343" dy="12">Penyffordd</tspan></text>
      <text x="466" y="514">Хайер<tspan x="466" dy="12">Киннертон</tspan><tspan x="466" dy="12">Higher</tspan><tspan x="466" dy="12">Kinnerton</tspan></text>
      <text x="25" y="530">Нерквис<tspan x="25" dy="12">Nercwys</tspan></text>
      <text x="233" y="557">Понтблиддин<tspan x="233" dy="12">Pontblyddyn</tspan></text>
      <text x="873" y="334">Грэйт Ботон<tspan x="873" dy="12">Great</tspan><tspan x="873" dy="12">Boughton</tspan></text>
      <text x="960" y="341">Крислтон<tspan x="960" dy="12">Christleton</tspan></text>
      <text x="676" y="370">Солтни<tspan x="676" dy="12">Saltney</tspan></text>
      <text x="993" y="406">Уэвертон<tspan x="993" dy="12">Waverton</tspan></text>
      <text x="818" y="467">Эклстон<tspan x="818" dy="12">Eccleston</tspan></text>
      <text x="642" y="481">Болдертон<tspan x="642" dy="12">Balderton</tspan></text>
      <text x="960" y="484">Сайтон<tspan x="960" dy="12">Saighton</tspan></text>
      <text x="717" y="512">Белгрейв<tspan x="717" dy="12">Belgrave</tspan></text>
      <text x="1015" y="517">Хаттон Хит<tspan x="1015" dy="12">Hatton Heath</tspan></text>
      <text x="932" y="549">Бруера<tspan x="932" dy="12">Bruera</tspan></text>
      <text x="1409" y="339">Юткинтон<tspan x="1409" dy="12">Utkinton</tspan></text>
      <text x="1528" y="333">Котбрук<tspan x="1528" dy="12">Cotebrook</tspan></text>
      <text x="1250" y="365">Даддон<tspan x="1250" dy="12">Duddon</tspan></text>
      <text x="1247" y="405">Бертон<tspan x="1247" dy="12">Burton</tspan></text>
      <text x="1318" y="403">Клоттон<tspan x="1318" dy="12">Clotton</tspan></text>
      <text x="1558" y="391">Раш<tspan x="1558" dy="12">Rush</tspan></text>
      <text x="1517" y="429">Итон<tspan x="1517" dy="12">Eaton</tspan></text>
      <text x="1436" y="450">Тарпорли<tspan x="1436" dy="12">Tarporley</tspan></text>
      <text x="1125" y="484">Харгрейв<tspan x="1125" dy="12">Hargrave</tspan></text>
      <text x="1254" y="509">Хаксли<tspan x="1254" dy="12">Huxley</tspan></text>
      <text x="1337" y="538">Брасси Грин<tspan x="1337" dy="12">Brassey Green</tspan></text>
      <text x="1074" y="563">Гейтшет<tspan x="1074" dy="12">Gatesheath</tspan></text>
    </g>
    <g class="place town-name">
      <text x="77" y="23">Флинт<tspan x="77" dy="13">Flint</tspan></text>
      <text x="283" y="141">Tata Steel UK Limited</text>
      <text x="376" y="265">Deeside</text>
      <text x="767" y="129">Chester Zoo</text>
      <text x="60" y="416">Молд<tspan x="60" dy="13">Mold</tspan></text>
    </g>
    <g class="place city"><text x="784" y="288">Честер<tspan x="784" dy="15">Chester</tspan></text></g>
    <g class="place green"><text x="295" y="231"><tspan class="em">Парк Уэпр</tspan><tspan x="295" dy="12">Wepre Park</tspan></text></g>
    <g class="place area">
      <text x="799" y="332">ХАНДБРИДЖ<tspan x="799" dy="9">HANDBRIDGE</tspan></text>
      <text transform="translate(523 119) rotate(42)">АНГЛИЯ</text>
      <text transform="translate(513 129) rotate(42)">УЭЛЬС</text>
      <text transform="translate(545 520) rotate(62)">АНГЛИЯ</text>
      <text transform="translate(522 532) rotate(62)">УЭЛЬС</text>
    </g>

    <!-- road names -->
    <g class="road-name">
      <text transform="translate(74 78) rotate(-88)">A5119</text>
      <text transform="translate(235 119) rotate(10)">A548</text>
      <text transform="translate(309 94) rotate(-70)">A548</text>
      <text transform="translate(298 197) rotate(-18)">Молдроуд</text>
      <text transform="translate(78 261) rotate(90)">A5119</text>
      <text transform="translate(399 284) rotate(-90)">A550</text>
      <text transform="translate(690 81) rotate(58)">Гров-роуд</text>
      <text transform="translate(685 150) rotate(40)">A540</text>
      <text transform="translate(606 240) rotate(36)">Силенд-роуд</text>
      <text transform="translate(765 255) rotate(60)">A540</text>
      <text transform="translate(977 25) rotate(-72)">Инс-лэйн</text>
      <text transform="translate(1048 57) rotate(-40)">Честер-роуд</text>
      <text transform="translate(1062 77) rotate(-5)">Морли-лэйн</text>
      <text transform="translate(925 99) rotate(55)">Пиктон-лэйн</text>
      <text transform="translate(1154 103) rotate(36)">Нортонс-лэйн</text>
      <text transform="translate(1416 22) rotate(55)">ламер-роуд</text>
      <text transform="translate(1446 11) rotate(30)">и-роуд</text>
      <text transform="translate(1375 68) rotate(-12)">Аштон-роуд</text>
      <text transform="translate(1284 106) rotate(-18)">Деламер-роуд</text>
      <text transform="translate(1281 291) rotate(-3)">Уиллингтон-роуд</text>
      <text transform="translate(12 357) rotate(45)">A541</text>
      <text transform="translate(124 356) rotate(-3)">A5119</text>
      <text transform="translate(264 352) rotate(-70)">Ливерпуль-роуд</text>
      <text transform="translate(386 373) rotate(-68)">A550</text>
      <text transform="translate(290 429) rotate(5)">A549</text>
      <text transform="translate(24 449) rotate(-25)">A5119</text>
      <text transform="translate(118 447) rotate(62)">A541</text>
      <text transform="translate(419 468) rotate(-45)">A5104</text>
      <text transform="translate(276 543) rotate(5)">A5104</text>
      <text transform="translate(330 553) rotate(48)">A550</text>
      <text transform="translate(429 578) rotate(-50)">роуд</text>
      <text transform="translate(750 363) rotate(-8)">A5104</text>
      <text transform="translate(605 388) rotate(-12)">A5104</text>
      <text transform="translate(732 406) rotate(-50)">Лач-лэйн</text>
      <text transform="translate(912 446) rotate(50)">Санди-лэйн</text>
      <text transform="translate(621 518) rotate(-38)">Черч-роуд</text>
      <text transform="translate(700 558) rotate(-68)">ексхем-роуд</text>
      <text transform="translate(989 557) rotate(-6)">Платтс-лэйн</text>
      <text transform="translate(1179 369) rotate(10)">Райекрофт-лэйн</text>
      <text transform="translate(1518 378) rotate(68)">Итон-лэйн</text>
      <text transform="translate(1081 397) rotate(5)">Гай-лэйн</text>
      <text transform="translate(1482 497) rotate(-55)">Итон-лэйн</text>
      <text transform="translate(1200 532) rotate(-68)">Ред-лэйн</text>
      <text transform="translate(1409 552) rotate(15)">Хаксли-лэйн</text>
    </g>
    <g class="road-name brown">
      <text transform="translate(589 75) rotate(-8)">Байпасс-роуд</text>
      <text transform="translate(693 10) rotate(-30)">A5117</text>
      <text transform="translate(783 179) rotate(-87)">Ливерпуль-роуд</text>
      <text transform="translate(454 202) rotate(-40)">A494</text>
      <text transform="translate(804 158) rotate(18)">A41</text>
      <text transform="translate(872 236) rotate(-42)">A56</text>
      <text transform="translate(908 271) rotate(68)">A41</text>
      <text transform="translate(1003 272) rotate(-8)">Tarvin Road</text>
      <text transform="translate(1532 158) rotate(-42)">Честер-роуд</text>
      <text transform="translate(1379 199) rotate(10)">A54</text>
      <text transform="translate(1229 220) rotate(-12)">A54</text>
      <text transform="translate(1498 243) rotate(18)">A54</text>
      <text transform="translate(62 479) rotate(2)">Mold Bypass</text>
      <text transform="translate(774 394) rotate(-65)">A483</text>
      <text transform="translate(676 525) rotate(-28)">A483</text>
      <text transform="translate(1024 559) rotate(75)">A41</text>
      <text transform="translate(1160 311) rotate(12)">A51</text>
      <text transform="translate(1436 415) rotate(-50)">A49</text>
      <text transform="translate(1382 430) rotate(2)">A51</text>
      <text transform="translate(1421 484) rotate(50)">A49</text>
      <text transform="translate(1444 563) rotate(-60)">49</text>
    </g>
    <g class="road-name blue">
      <text transform="translate(376 179) rotate(15)">Ди</text>
      <text transform="translate(849 550) rotate(60)">Ди</text>
    </g>

    <g class="shield">
      <rect x="698" y="28" width="25" height="11"/><text x="710" y="37">M56</text>
      <rect x="832" y="6" width="24" height="11"/><text x="844" y="15">M56</text>
    </g>
    <circle cx="354" cy="136" r="6" fill="#fff"/><rect x="352" y="134" width="5" height="5" fill="#7b6155"/>
    <circle cx="811" cy="125" r="6" fill="#fff"/>
    <g fill="#6d5a4c"><ellipse cx="811" cy="127" rx="3" ry="2"/><circle cx="808" cy="124" r="1"/><circle cx="810" cy="122" r="1"/><circle cx="813" cy="122" r="1"/><circle cx="815" cy="124" r="1"/></g>

    <g class="pin"><path d="M784 288c-1-10-11-16-11-27a11 11 0 0 1 22 0c0 11-10 17-11 27z"/><circle cx="784" cy="261" r="4"/></g>
  </svg>

  <button type="button" class="map-type">Карта</button>
  <div class="map-tools">
    <button type="button" class="tool" aria-label="Street View"><svg class="pegman" viewBox="0 0 12 20"><circle cx="6" cy="3.500" r="3.200"/><path d="M2.500 7h7l2 7H9.500l-.5 6H3l-.5-6H.5z"/><path d="M4 7h4L6 10z" fill="#e9801d" stroke="none"/></svg></button>
    <div class="zoom">
      <button type="button" aria-label="Zoom in"><svg viewBox="0 0 10 10"><path d="M0 5h10M5 0v10"/></svg></button>
      <button type="button" aria-label="Zoom out"><svg viewBox="0 0 10 10"><path d="M0 5h10"/></svg></button>
    </div>
  </div>
  <a href="#" class="google"><span class="g-blue">G</span><span class="g-red">o</span><span class="g-yellow">o</span><span class="g-blue">g</span><span class="g-green">l</span><span class="g-red">e</span></a>
  <div class="map-legal">
    <span>Картографические данные © 2016 Google</span>
    <a href="#">Условия использования</a>
    <a href="#">Сообщить об ошибке на карте</a>
  </div>
</section>

<footer class="footer">
  <a href="#" class="logo"><svg><use href="#i-mountain"/></svg><span>ASCENT</span></a>
  <nav class="footer-links">
    <a href="#">IPhone Kits</a>
    <a href="#">Responsive Web Sites</a>
    <a href="#">UI kits</a>
    <a href="#">Web Apps</a>
    <a href="#">Windows Kits</a>
  </nav>
  <nav class="social">
    <a href="#" aria-label="Twitter"><svg><use href="#i-twitter"/></svg></a>
    <a href="#" aria-label="Facebook"><svg><use href="#i-facebook"/></svg></a>
    <a href="#" aria-label="LinkedIn"><svg><use href="#i-linkedin"/></svg></a>
    <a href="#" aria-label="Google+"><svg><use href="#i-google"/></svg></a>
    <a href="#" aria-label="Pinterest"><svg><use href="#i-pinterest"/></svg></a>
    <a href="#" aria-label="Dribbble"><svg><use href="#i-dribbble"/></svg></a>
  </nav>
  <p class="copyright">© 2016. WordPress Theme - ascent by <a href="#">Themeora</a></p>
</footer>

</body>
</html>
```

FILE: styles.css
```css
:root{
  --red:#cc2648;
  --dark:#111011;
  --grey:#f5f5f5;
}
*{box-sizing:border-box;}
body{margin:0;font-family:'Open Sans','Noto Sans',Arial,sans-serif;font-size:18px;line-height:32px;color:#717f86;background:#fff;}
a{text-decoration:none;color:var(--red);}
button{font-family:inherit;border:none;padding:0;cursor:pointer;}
.sprite{display:none;}
.container{max-width:1140px;margin:0 auto;}

/* header */
.hero{background:var(--red);color:#fff;padding:51px 20px 103px;}
.nav{display:flex;justify-content:space-between;align-items:center;height:35px;}
.logo{display:inline-flex;align-items:center;gap:4px;height:32px;color:#fff;font-family:Lato,sans-serif;font-size:27px;font-weight:300;}
.logo svg{width:46px;height:32px;fill:currentColor;}
.nav .logo{align-self:flex-end;}
.nav-right{display:flex;align-items:center;gap:20px;}
.cart{display:flex;align-items:center;gap:12px;color:#fff;}
.cart svg{width:21px;height:18px;fill:currentColor;}
.count{position:relative;width:33px;height:33px;line-height:33px;border-radius:4px;background:var(--dark);font-size:12px;text-align:center;}
.count::before{content:"";position:absolute;left:-4px;top:12px;border:5px solid transparent;border-right-color:var(--dark);border-left:none;}
.burger{display:flex;flex-direction:column;gap:6px;width:35px;background:none;}
.burger span{height:4px;background:#fff;}
h1{margin:107px 15px 0 0;font-size:65px;line-height:90px;font-weight:700;text-align:center;}

/* intro */
.intro{padding:93px 20px 109px;}
.intro p{max-width:900px;margin:0 auto;font-size:22px;line-height:36px;text-align:center;}
.smile{width:22px;height:22px;vertical-align:-3px;}
.social{display:flex;justify-content:center;gap:22px;margin-top:64px;padding-right:8px;color:#3c3c3c;}
.social a{display:block;height:24px;color:inherit;}
.social svg{display:block;width:22px;height:24px;fill:currentColor;overflow:visible;}
.intro .social{height:25px;}

/* form */
.contact{background:var(--grey);padding:93px 20px 94px;}
.contact-form{display:flex;flex-direction:column;gap:27px;max-width:600px;margin:0 auto;}
.contact-form input,.contact-form textarea{width:100%;height:59px;padding:0 15px;border:1px solid #dcdcdc;border-radius:0;background:#fff;font-family:inherit;font-size:18px;color:#555;}
.contact-form textarea{display:block;height:180px;padding-top:16px;line-height:26px;}
.contact-form ::placeholder{color:#a9a9a9;opacity:1;}
.btn{align-self:center;margin-right:20px;width:170px;height:47px;border-radius:24px;background:var(--dark);color:#fff;font-size:17px;}

/* map */
.map{position:relative;height:580px;overflow:hidden;font-family:Roboto,Arial,sans-serif;}
.map-canvas{display:block;width:100%;height:100%;}
.map-canvas path{fill:none;}
.map-canvas .town{fill:#e8e7e4;}
.map-canvas .wood{fill:#d1e4c8;}
.map-canvas .park{fill:#c9e6a5;}
.map-canvas .water{fill:#a3ccff;}
.map-canvas .shop{fill:#f4e1ea;}
.map-canvas .sand{fill:#f5dfc0;}
.stream{stroke:#a3ccff;stroke-width:3;}
.canal{stroke:#a3ccff;stroke-width:11;stroke-linejoin:round;}
.rail{stroke:#d3d0cc;stroke-width:4;}
.border-line{stroke:#a5a19b;stroke-width:4;stroke-dasharray:22 8;}
.lane{stroke:#faf8f4;stroke-width:4;}
.street{stroke:#fff;stroke-width:6;stroke-linejoin:round;}
.main{stroke:#fff;stroke-width:10;stroke-linejoin:round;}
.a-case{stroke:#ecd08a;stroke-width:13;}
.a-road{stroke:#ffe9a5;stroke-width:8;}
.m-case{stroke:#e8ab66;stroke-width:15;}
.m-road{stroke:#ffcb8b;stroke-width:10;}
.place,.road-name{font-size:12px;text-anchor:middle;fill:#4b4131;stroke:#f6f4ee;stroke-width:2px;paint-order:stroke;stroke-linejoin:round;}
.town-name{font-size:13px;}
.city{font-size:15px;}
.green{fill:#4f9a2f;}
.em{font-style:italic;}
.area{font-size:10px;fill:#91856f;}
.road-name{font-size:10px;fill:#777;}
.brown{fill:#8a5a20;}
.blue{fill:#4d90e0;}
.shield rect{fill:#7070c4;}
.shield text{font-size:9px;font-weight:700;fill:#fff;text-anchor:middle;}
.map-canvas .pin path{fill:#ee4f44;stroke:#b2312a;}
.pin circle{fill:#60130f;}
.map-type{position:absolute;left:10px;top:10px;width:46px;height:43px;border-radius:2px;background:#fff;box-shadow:0 1px 4px rgba(0,0,0,0.3);font-size:11px;font-weight:500;color:#000;}
.map-tools{position:absolute;right:10px;bottom:25px;display:flex;flex-direction:column;gap:10px;width:28px;}
.tool,.zoom{border-radius:2px;background:#fff;box-shadow:0 1px 4px rgba(0,0,0,0.3);}
.tool{height:28px;}
.tool svg,.zoom svg{display:block;margin:0 auto;}
.pegman{width:12px;height:20px;}
.map-tools .pegman{fill:#fbb836;stroke:#c98a1a;stroke-width:1;}
.zoom button{display:block;width:20px;height:27px;margin:0 auto;background:none;}
.zoom button + button{border-top:1px solid #e6e6e6;}
.zoom svg{width:10px;height:10px;stroke:#666;stroke-width:3;}
.google{position:absolute;left:7px;bottom:1px;font-family:Lato,sans-serif;font-size:20px;line-height:26px;font-weight:400;text-shadow:0 0 2px #fff;-webkit-text-stroke:0 currentColor;}
.g-blue{color:#4285f4;}
.g-red{color:#ea4335;}
.g-yellow{color:#fbbc05;}
.g-green{color:#34a853;}
.map-legal{position:absolute;right:0;bottom:0;display:flex;gap:12px;padding:0 6px;background:rgba(245,245,245,0.7);font-size:10px;line-height:12px;color:#444;}
.map-legal a{color:#444;}

/* footer */
.footer{display:flex;flex-direction:column;align-items:center;padding:108px 20px 105px;background:#050002;color:#555;}
.footer-links{display:flex;gap:25px;margin-top:52px;}
.footer .social{margin-top:62px;color:#fff;}
.copyright{margin:68px 0 1px;}
@media(max-width:600px){
  .footer-links{flex-wrap:wrap;justify-content:center;}
  h1{font-size:44px;line-height:60px;}
}
```
